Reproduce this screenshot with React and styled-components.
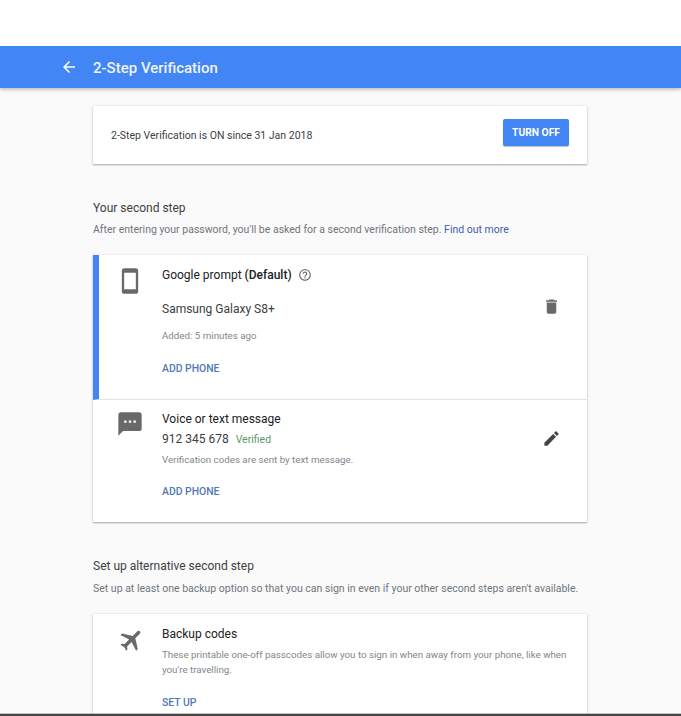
import styled, { createGlobalStyle } from "styled-components"

const GlobalStyle = createGlobalStyle`
    html, body {
        margin: 0;
        padding: 0;
        background: #ffffff;
    }
    * {
        box-sizing: border-box;
    }
`

function Icon({ d, size = 24, color = "#696969", rotate = 0 }) {
    return (
        <svg
            width={size}
            height={size}
            viewBox="0 0 24 24"
            fill={color}
            style={rotate ? { transform: `rotate(${rotate}deg)` } : undefined}
        >
            <path d={d} />
        </svg>
    )
}

const paths = {
    back: "M20 11H7.83l5.59-5.59L12 4l-8 8 8 8 1.41-1.41L7.83 13H20v-2z",
    phone: "M17 1.01L7 1c-1.1 0-2 .9-2 2v18c0 1.1.9 2 2 2h10c1.1 0 2-.9 2-2V3c0-1.1-.9-1.99-2-1.99zM17 19H7V5h10v14z",
    sms: "M20 2H4c-1.1 0-1.99.9-1.99 2L2 22l4-4h14c1.1 0 2-.9 2-2V4c0-1.1-.9-2-2-2zM9 11H7V9h2v2zm4 0h-2V9h2v2zm4 0h-2V9h2v2z",
    trash: "M6 19c0 1.1.9 2 2 2h8c1.1 0 2-.9 2-2V7H6v12zM19 4h-3.5l-1-1h-5l-1 1H5v2h14V4z",
    edit: "M3 17.25V21h3.75L17.81 9.94l-3.75-3.75L3 17.25zM20.71 7.04c.39-.39.39-1.02 0-1.41l-2.34-2.34c-.39-.39-1.02-.39-1.41 0l-1.83 1.83 3.75 3.75 1.83-1.83z",
    plane: "M21 16v-2l-8-5V3.5c0-.83-.67-1.5-1.5-1.5S10 2.67 10 3.5V9l-8 5v2l8-2.5V19l-2 1.5V22l3.5-1 3.5 1v-1.5L13 19v-5.5l8 2.5z",
    help: "M11 18h2v-2h-2v2zm1-16C6.48 2 2 6.48 2 12s4.48 10 10 10 10-4.48 10-10S17.52 2 12 2zm0 18c-4.41 0-8-3.59-8-8s3.59-8 8-8 8 3.59 8 8-3.59 8-8 8zm0-14c-2.21 0-4 1.79-4 4h2c0-1.1.9-2 2-2s2 .9 2 2c0 2-3 1.75-3 5h2c0-2.25 3-2.5 3-5 0-2.21-1.79-4-4-4z",
}

export default function App() {
    return (
        <Page>
            <GlobalStyle />
            <TopBlank />
            <Header>
                <BackButton>
                    <Icon d={paths.back} size={18} color="#ffffff" />
                </BackButton>
                <HeaderTitle>2-Step Verification</HeaderTitle>
            </Header>

            <Content>
                <StatusCard>
                    <StatusText>2-Step Verification is ON since 31 Jan 2018</StatusText>
                    <TurnOff>TURN OFF</TurnOff>
                </StatusCard>

                <SectionHead>
                    <SectionTitle>Your second step</SectionTitle>
                    <SectionText $top={7}>
                        After entering your password, you'll be asked for a second verification step. <LearnMore>Find out more</LearnMore>
                    </SectionText>
                </SectionHead>

                <Card>
                    <PromptRow>
                        <IconCol $top={12}>
                            <Icon d={paths.phone} size={28} />
                        </IconCol>
                        <Body>
                            <RowTitle>
                                Google prompt <b>(Default)</b>
                                <HelpIcon>
                                    <Icon d={paths.help} size={14} />
                                </HelpIcon>
                            </RowTitle>
                            <DeviceName>Samsung Galaxy S8+</DeviceName>
                            <Small $top={13}>Added: 5 minutes ago</Small>
                            <ActionLink $top={20}>ADD PHONE</ActionLink>
                        </Body>
                        <RowAction $top={42}>
                            <Icon d={paths.trash} size={19} />
                        </RowAction>
                    </PromptRow>

                    <VoiceRow>
                        <IconCol $top={10}>
                            <Icon d={paths.sms} size={28} />
                        </IconCol>
                        <Body $top={11}>
                            <RowTitle>Voice or text message</RowTitle>
                            <PhoneLine>
                                912 345 678 <Verified>Verified</Verified>
                            </PhoneLine>
                            <Small $top={6}>Verification codes are sent by text message.</Small>
                            <ActionLink $top={19}>ADD PHONE</ActionLink>
                        </Body>
                        <RowAction $top={29}>
                            <Icon d={paths.edit} size={19} color="#444444" />
                        </RowAction>
                    </VoiceRow>
                </Card>

                <SectionHead>
                    <SectionTitle>Set up alternative second step</SectionTitle>
                    <SectionText $top={8}>
                        Set up at least one backup option so that you can sign in even if your other second steps aren't available.
                    </SectionText>
                </SectionHead>

                <Card>
                    <BackupRow>
                        <PlaneCol $top={12}>
                            <Icon d={paths.plane} size={28} rotate={45} />
                        </PlaneCol>
                        <Body>
                            <RowTitle>Backup codes</RowTitle>
                            <Paragraph>
                                These printable one-off passcodes allow you to sign in when away from your phone, like when you're travelling.
                            </Paragraph>
                            <ActionLink $top={19}>SET UP</ActionLink>
                        </Body>
                    </BackupRow>
                </Card>
            </Content>

            <BottomEdge />
        </Page>
    )
}

const Page = styled.div`
    width: 681px;
    height: 716px;
    overflow: hidden;
    position: relative;
    display: flex;
    flex-direction: column;
    background: #fafafa;
    font-family: Roboto, "Liberation Sans", sans-serif;
`

const TopBlank = styled.div`
    height: 46px;
    flex: none;
    background: #ffffff;
`

const Header = styled.header`
    height: 42px;
    flex: none;
    display: flex;
    align-items: center;
    padding-left: 60px;
    background: #4285f4;
    box-shadow: 0 2px 3px rgba(0, 0, 0, 0.22);
    position: relative;
    z-index: 1;
`

const BackButton = styled.div`
    width: 18px;
    height: 18px;
    display: flex;
    margin-right: 15px;
`

const HeaderTitle = styled.h1`
    margin: 0;
    padding-top: 1px;
    font-size: 15px;
    font-weight: 500;
    color: #eef4ff;
`

const Content = styled.main`
    flex: 1;
    min-height: 0;
    padding: 18px 94px 0 93px;
`

const Card = styled.section`
    background: #ffffff;
    border-radius: 1px;
    box-shadow: 0 1px 2px rgba(0, 0, 0, 0.32), 0 0 3px rgba(0, 0, 0, 0.08);
`

const StatusCard = styled(Card)`
    height: 58px;
    display: flex;
    align-items: center;
    justify-content: space-between;
    padding: 0 18px;
`

const StatusText = styled.span`
    font-size: 10.5px;
    color: #3c4043;
`

const TurnOff = styled.button`
    width: 66px;
    height: 27px;
    margin-top: -5px;
    border: none;
    border-radius: 2px;
    background: #4285f4;
    color: #ffffff;
    font-family: inherit;
    font-size: 10.3px;
    font-weight: 700;
    padding: 0;
    box-shadow: 0 1px 1px rgba(0, 0, 0, 0.25);
`

const SectionHead = styled.div`
    margin-top: 36px;
    margin-bottom: 18px;
`

const SectionTitle = styled.h2`
    margin: 0;
    font-size: 12px;
    line-height: 16px;
    font-weight: 400;
    color: #3c4043;
`

const SectionText = styled.p`
    margin: ${p => p.$top}px 0 0;
    font-size: 10.5px;
    line-height: 14px;
    color: #70757a;
`

const LearnMore = styled.a`
    color: #3f5fa8;
`

const Row = styled.div`
    display: flex;
    align-items: flex-start;
`

const PromptRow = styled(Row)`
    height: 145px;
    border-left: 6px solid #4285f4;
    border-bottom: 1px solid #e4e4e4;
    padding-left: 8px;
`

const VoiceRow = styled(Row)`
    height: 122px;
    padding-left: 14px;
`

const BackupRow = styled(Row)`
    height: 110px;
    padding-left: 14px;
`

const IconCol = styled.div`
    width: 46px;
    flex: none;
    padding-top: ${p => p.$top}px;
    display: flex;
    justify-content: center;
    margin-right: 9px;
`

const PlaneCol = styled(IconCol)`
    padding-left: 3px;
`

const Body = styled.div`
    flex: 1;
    min-width: 0;
    padding-top: ${p => p.$top ?? 12}px;
    padding-right: 20px;
`

const RowTitle = styled.div`
    font-size: 12px;
    line-height: 16px;
    color: #202124;
    display: flex;
    align-items: center;
    gap: 3px;

    b {
        font-weight: 500;
    }
`

const HelpIcon = styled.span`
    display: flex;
    margin-left: 3px;
`

const DeviceName = styled.div`
    margin-top: 18px;
    font-size: 12px;
    line-height: 16px;
    color: #3c4043;
`

const PhoneLine = styled.div`
    margin-top: 4px;
    font-size: 12px;
    line-height: 16px;
    color: #3c4043;
`

const Verified = styled.span`
    margin-left: 4px;
    font-size: 10.5px;
    color: #5a9a66;
`

const Small = styled.div`
    margin-top: ${p => p.$top}px;
    font-size: 9.75px;
    line-height: 12px;
    color: #80868b;
`

const Paragraph = styled.p`
    margin: 5px 0 0;
    font-size: 9.75px;
    line-height: 15px;
    color: #80868b;
`

const ActionLink = styled.a`
    display: block;
    margin-top: ${p => p.$top}px;
    font-size: 10.4px;
    line-height: 14px;
    font-weight: 500;
    color: #5079b5;
`

const RowAction = styled.div`
    flex: none;
    width: 20px;
    margin-right: 25px;
    padding-top: ${p => p.$top}px;
`

const BottomEdge = styled.div`
    position: absolute;
    left: 0;
    right: 0;
    bottom: 0;
    height: 3px;
    border-top: 1px solid #c4c4c4;
    background: #444444;
`
